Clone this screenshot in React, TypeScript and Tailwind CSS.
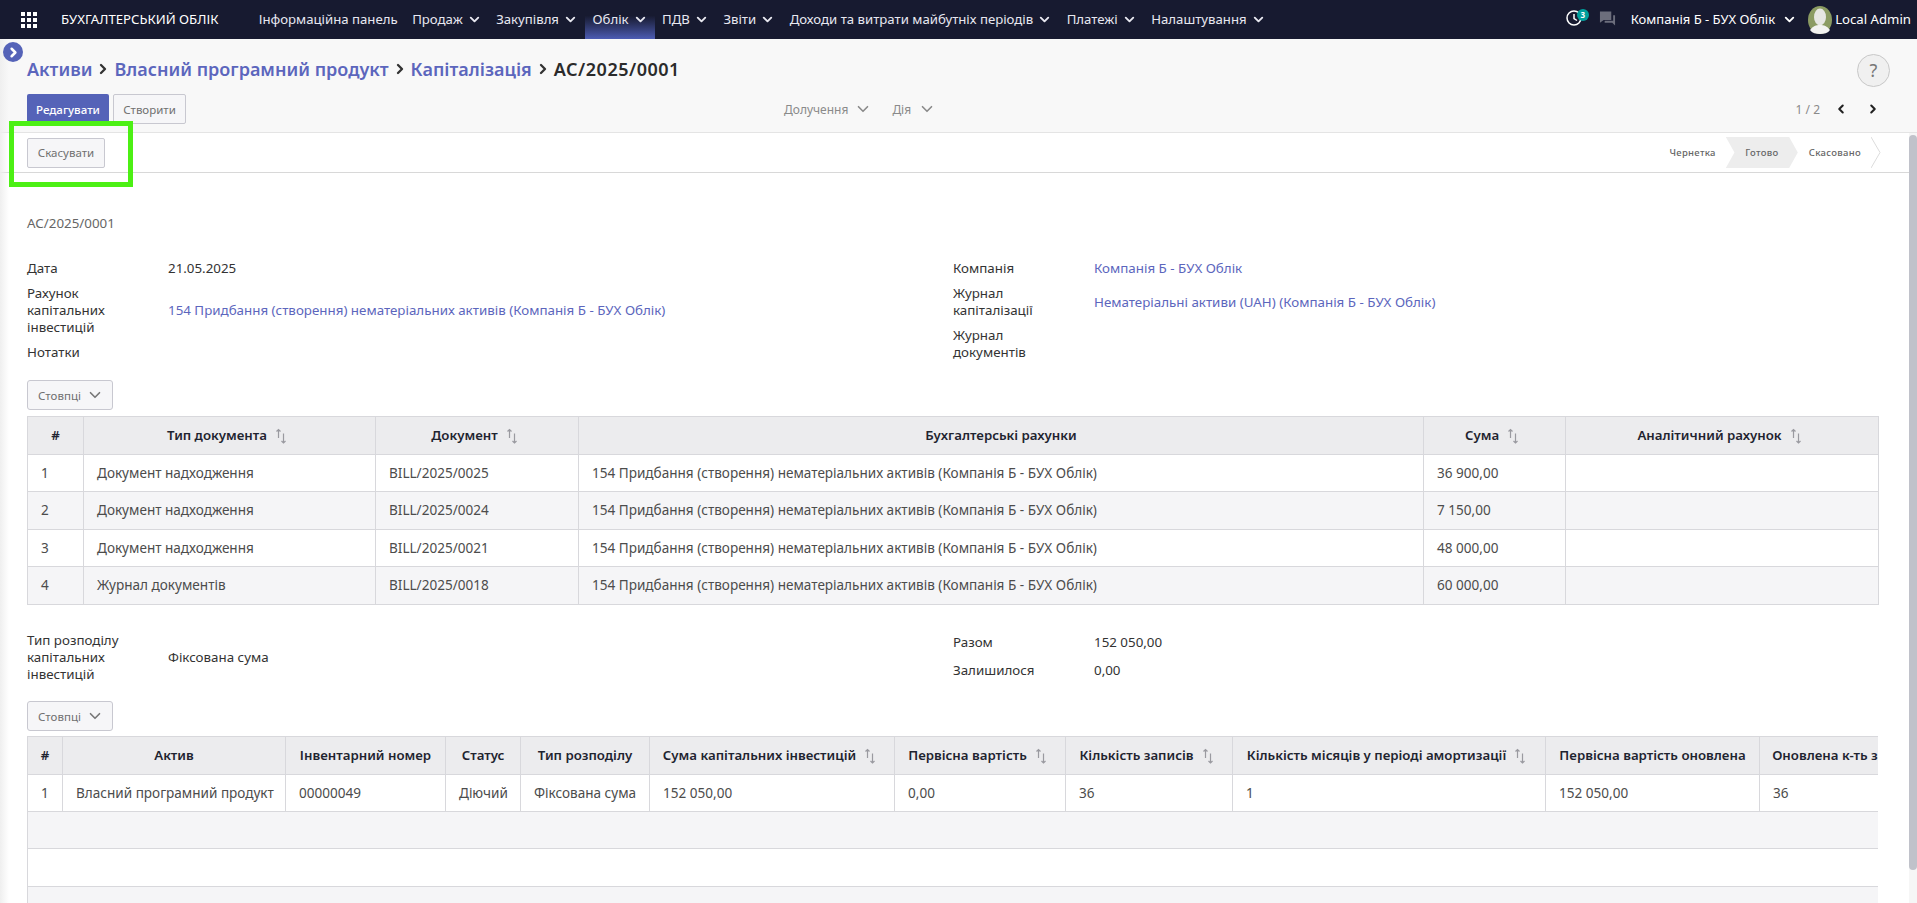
import { ChevronDown, ChevronLeft, ChevronRight } from 'lucide-react';

const menu = [
  { label: 'Інформаційна панель' },
  { label: 'Продаж', arrow: true },
  { label: 'Закупівля', arrow: true },
  { label: 'Облік', arrow: true, active: true },
  { label: 'ПДВ', arrow: true },
  { label: 'Звіти', arrow: true },
  { label: 'Доходи та витрати майбутніх періодів', arrow: true },
  { label: 'Платежі', arrow: true },
  { label: 'Налаштування', arrow: true },
];

const account = '154 Придбання (створення) нематеріальних активів (Компанія Б - БУХ Облік)';

const docs = [
  ['1', 'Документ надходження', 'BILL/2025/0025', account, '36 900,00', ''],
  ['2', 'Документ надходження', 'BILL/2025/0024', account, '7 150,00', ''],
  ['3', 'Документ надходження', 'BILL/2025/0021', account, '48 000,00', ''],
  ['4', 'Журнал документів', 'BILL/2025/0018', account, '60 000,00', ''],
];

const docHead = [
  { label: '#', className: 'w-[56px]' },
  { label: 'Тип документа', sort: true, className: 'w-[292px]' },
  { label: 'Документ', sort: true, className: 'w-[203px]' },
  { label: 'Бухгалтерські рахунки', className: 'w-[845px]' },
  { label: 'Сума', sort: true, className: 'w-[142px]' },
  { label: 'Аналітичний рахунок', sort: true, className: 'w-[313px]' },
];

const assetHead = [
  { label: '#', className: 'w-[35px]' },
  { label: 'Актив', className: 'w-[223px]' },
  { label: 'Інвентарний номер', className: 'w-[160px]' },
  { label: 'Статус', className: 'w-[75px]' },
  { label: 'Тип розподілу', className: 'w-[129px]' },
  { label: 'Сума капітальних інвестицій', sort: true, className: 'w-[245px]' },
  { label: 'Первісна вартість', sort: true, className: 'w-[171px]' },
  { label: 'Кількість записів', sort: true, className: 'w-[167px]' },
  { label: 'Кількість місяців у періоді амортизації', sort: true, className: 'w-[313px]' },
  { label: 'Первісна вартість оновлена', className: 'w-[214px]' },
  { label: 'Оновлена к-ть записів', className: 'w-[174px]' },
];

const assets = [
  ['1', 'Власний програмний продукт', '00000049', 'Діючий', 'Фіксована сума', '152 050,00', '0,00', '36', '1', '152 050,00', '36'],
];

function SortIcon() {
  return (
    <svg viewBox="0 0 12 16" className="ml-2 mr-[5px] inline-block h-[16px] w-[12px] align-middle text-[#9a9aa0]" fill="none" stroke="currentColor" strokeWidth="1.2">
      <path d="M3.5 10V1.5M1.5 3.5l2-2 2 2" />
      <path d="M8.5 5.5V15M6.5 13l2 2 2-2" />
    </svg>
  );
}

function Columns() {
  return (
    <button className="flex h-[30px] w-[86px] items-center justify-between rounded-[3px] border border-[#c8c8d0] bg-[#f6f6f8] pl-[10px] pr-[8px] text-[11.5px] text-[#707070]">
      Стовпці
      <ChevronDown size={18} strokeWidth={2.2} className="text-[#777]" />
    </button>
  );
}

function Head({ cols }: { cols: { label: string; sort?: boolean; className: string }[] }) {
  return (
    <thead>
      <tr className="h-[38px] bg-[#ececee]">
        {cols.map((c) => (
          <th key={c.label} className={`${c.className} overflow-hidden whitespace-nowrap border border-[#d8d8dc] px-[10px] text-center text-[13.25px] font-semibold text-[#1f2430]`}>
            {c.label}
            {c.sort && <SortIcon />}
          </th>
        ))}
      </tr>
    </thead>
  );
}

function Row({ cells, striped }: { cells: string[]; striped: boolean }) {
  return (
    <tr className={`${striped ? 'h-[38px] bg-[#f5f5f7]' : 'h-[37px] bg-white'}`}>
      {cells.map((c, i) => (
        <td key={i} className="overflow-hidden whitespace-nowrap border border-[#d8d8dc] px-[13px] text-[13.55px] text-[#4c4c4c]">
          {c}
        </td>
      ))}
    </tr>
  );
}

function Field({ label, children }: { label: string; children?: React.ReactNode }) {
  return (
    <div className="flex items-center">
      <div className="w-[141px] shrink-0 pr-[20px] text-[#333]">{label}</div>
      <div>{children}</div>
    </div>
  );
}

export default function App() {
  return (
    <div className="relative flex h-[903px] w-[1917px] flex-col overflow-hidden bg-white text-[13.35px] leading-[17px] text-[#4c4c4c] [font-family:'Noto_Sans',sans-serif]">
      <header className="flex h-[39px] shrink-0 items-center bg-[#171a30] text-[13.2px] text-white">
        <svg viewBox="0 0 16 16" className="ml-[21px] h-[16px] w-[16px] fill-white">
          <rect x="0" y="0" width="4" height="4" /><rect x="6" y="0" width="4" height="4" /><rect x="12" y="0" width="4" height="4" />
          <rect x="0" y="6" width="4" height="4" /><rect x="6" y="6" width="4" height="4" /><rect x="12" y="6" width="4" height="4" />
          <rect x="0" y="12" width="4" height="4" /><rect x="6" y="12" width="4" height="4" /><rect x="12" y="12" width="4" height="4" />
        </svg>
        <span className="ml-[24px] mr-[33px]">БУХГАЛТЕРСЬКИЙ ОБЛІК</span>
        <nav className="flex h-full">
          {menu.map((m) => (
            <div
              key={m.label}
              className={`flex h-full items-center gap-[4px] px-[7.25px] text-[#e8e8f0] ${m.active ? 'bg-gradient-to-b from-[#171a30] from-40% to-[#4d5cb4]' : ''}`}
            >
              {m.label}
              {m.arrow && <ChevronDown size={15} strokeWidth={3} />}
            </div>
          ))}
        </nav>
        <div className="ml-auto flex items-center pr-[6px]">
          <div className="relative mb-[3px] mr-[17px] h-[16px] w-[16px]">
            <svg viewBox="0 0 16 16" className="h-[16px] w-[16px]" fill="none" stroke="white" strokeWidth="1.5">
              <circle cx="8" cy="8" r="7" />
              <path d="M8 4v4.5l3 2" />
            </svg>
            <span className="absolute -right-[7px] -top-[1px] flex h-[12px] w-[12px] items-center justify-center rounded-full bg-[#00a09d] text-[8px] font-bold leading-none text-white">3</span>
          </div>
          <svg viewBox="0 0 18 16" className="mb-[3px] mr-[15px] h-[16px] w-[17px] fill-[#6c6e7c]">
            <path d="M1 1h12v9H5l-4 3z" />
            <path d="M15 5h2v11l-3-3H6v-2h9z" />
          </svg>
          <span className="text-[13px]">Компанія Б - БУХ Облік</span>
          <ChevronDown size={15} strokeWidth={3} className="ml-[7px]" />
          <svg viewBox="0 0 24 28" className="ml-[11px] h-[28px] w-[24px]">
            <ellipse cx="12" cy="14" rx="12" ry="14" fill="#8b9b62" />
            <ellipse cx="12" cy="11" rx="6" ry="8.5" fill="#e6e6e2" />
            <path d="M2 24c3-4 6-5 10-5s7 1 10 5c-2 3-6 4-10 4s-8-1-10-4z" fill="#f2f2f0" />
          </svg>
          <span className="ml-[3px]">Local Admin</span>
        </div>
      </header>

      <div className="flex min-h-0 flex-1 flex-col">
        <div className="h-[94px] shrink-0 border-b border-[#e4e4e4] bg-[#f8f8f8] pl-[27px] pr-[27px] pt-[14px]">
          <div className="flex items-center justify-between">
            <div className="-mt-[2px] flex items-center gap-[3px] text-[18px] font-semibold leading-[26px] text-[#5c66bd]">
              <span>Активи</span>
              <ChevronRight size={16} strokeWidth={3.5} className="text-[#333]" />
              <span>Власний програмний продукт</span>
              <ChevronRight size={16} strokeWidth={3.5} className="text-[#333]" />
              <span>Капіталізація</span>
              <ChevronRight size={16} strokeWidth={3.5} className="text-[#333]" />
              <span className="tracking-[0.5px] text-[#2b2b2b]">АС/2025/0001</span>
            </div>
            <div className="mt-[1px] flex h-[33px] w-[33px] items-center justify-center rounded-full border border-[#c8c8c8] bg-[#f0f0f0] text-[18px] text-[#777]">?</div>
          </div>
          <div className="mt-[7px] flex items-center">
            <div className="flex gap-[4px]">
              <button className="h-[30px] w-[82px] rounded-[2px] bg-[#5563b8] text-[11.5px] font-medium text-white">Редагувати</button>
              <button className="h-[30px] w-[73px] rounded-[2px] border border-[#c8c8d0] bg-[#f6f6f8] text-[11.5px] text-[#707070]">Створити</button>
            </div>
            <div className="ml-[598px] flex items-center text-[12px] text-[#8a8a8a]">
              <span>Долучення</span>
              <ChevronDown size={18} strokeWidth={2.2} className="ml-[6px]" />
              <span className="ml-[20px]">Дія</span>
              <ChevronDown size={18} strokeWidth={2.2} className="ml-[7px]" />
            </div>
            <div className="ml-auto mr-[9px] flex items-center text-[12px] text-[#8a8a8a]">
              <span>1 / 2</span>
              <ChevronLeft size={14} strokeWidth={3.5} className="ml-[14px] text-[#222]" />
              <ChevronRight size={14} strokeWidth={3.5} className="ml-[18px] mr-[1px] text-[#222]" />
            </div>
          </div>
        </div>

        <div className="flex h-[40px] shrink-0 items-center justify-between border-b border-[#d8d8d8] bg-white pl-[27px] pr-[36px]">
          <button className="h-[30px] w-[78px] rounded-[2px] border border-[#c8c8d0] bg-[#f6f6f8] text-[11.5px] text-[#707070]">Скасувати</button>
          <div className="flex items-center text-[9.5px] font-medium tracking-[0.3px] text-[#666]">
            <span className="mr-[10px]">Чернетка</span>
            <span className="flex h-[31px] w-[72px] items-center justify-center bg-[#ededed] [clip-path:polygon(0_0,88%_0,100%_50%,88%_100%,0_100%,12%_50%)]">Готово</span>
            <span className="ml-[11px]">Скасовано</span>
            <svg viewBox="0 0 10 31" className="ml-[10px] h-[31px] w-[10px]" fill="none" stroke="#dcdcdc">
              <path d="M0 0l9 15.5L0 31" />
            </svg>
          </div>
        </div>

        <div className="pl-[27px] pr-[38px]">
          <div className="mt-[42px] text-[#666]">АС/2025/0001</div>

          <div className="mt-[28px] grid grid-cols-[926px_1fr]">
            <div className="flex flex-col gap-[8px]">
              <Field label="Дата"><span className="text-[#333]">21.05.2025</span></Field>
              <Field label="Рахунок капітальних інвестицій"><span className="text-[#5c66bd]">{account}</span></Field>
              <Field label="Нотатки" />
            </div>
            <div className="flex flex-col gap-[8px]">
              <Field label="Компанія"><span className="text-[#5c66bd]">Компанія Б - БУХ Облік</span></Field>
              <Field label="Журнал капіталізації"><span className="text-[#5c66bd]">Нематеріальні активи (UAH) (Компанія Б - БУХ Облік)</span></Field>
              <Field label="Журнал документів" />
            </div>
          </div>

          <div className="mt-[19px]"><Columns /></div>

          <table className="mt-[6px] w-[1851px] table-fixed border-collapse">
            <Head cols={docHead} />
            <tbody>
              {docs.map((r, i) => <Row key={r[0]} cells={r} striped={i % 2 === 1} />)}
            </tbody>
          </table>

          <div className="mt-[27px] grid grid-cols-[926px_1fr]">
            <Field label="Тип розподілу капітальних інвестицій"><span className="text-[#333]">Фіксована сума</span></Field>
            <div className="flex flex-col gap-[11px] pt-[2px]">
              <Field label="Разом"><span className="text-[#333]">152 050,00</span></Field>
              <Field label="Залишилося"><span className="text-[#333]">0,00</span></Field>
            </div>
          </div>

          <div className="mt-[18px]"><Columns /></div>

          <div className="mt-[5px] w-[1851px] overflow-hidden">
            <table className="w-[1906px] table-fixed border-collapse">
              <Head cols={assetHead} />
              <tbody>
                {assets.map((r) => <Row key={r[0]} cells={r} striped={false} />)}
                <tr className="h-[37px] border border-[#d8d8dc] bg-[#f5f5f7]"><td colSpan={11} /></tr>
                <tr className="h-[38px] border border-[#d8d8dc] bg-white"><td colSpan={11} /></tr>
                <tr className="h-[37px] border border-[#d8d8dc] bg-[#f5f5f7]"><td colSpan={11} /></tr>
              </tbody>
            </table>
          </div>
        </div>
      </div>

      {/* collapsed sidebar strip and its toggle */}
      <div className="absolute bottom-0 left-0 top-[39px] w-[9px] bg-gradient-to-r from-[#efefef] to-transparent" />
      <div className="absolute left-[3px] top-[42px] flex h-[20px] w-[20px] items-center justify-center rounded-full bg-[#5563b8]">
        <ChevronRight size={15} strokeWidth={4} className="text-white" />
      </div>

      {/* scrollbar */}
      <div className="absolute bottom-0 right-0 top-[133px] w-[8px] bg-[#f6f6f6]">
        <div className="mt-[2px] h-[735px] rounded-[4px] bg-[#c0c2ca]" />
      </div>

      {/* highlight drawn over the screenshot */}
      <div className="absolute left-[9px] top-[121px] h-[66px] w-[124px] border-[5px] border-[#4cf014]" />
    </div>
  );
}
